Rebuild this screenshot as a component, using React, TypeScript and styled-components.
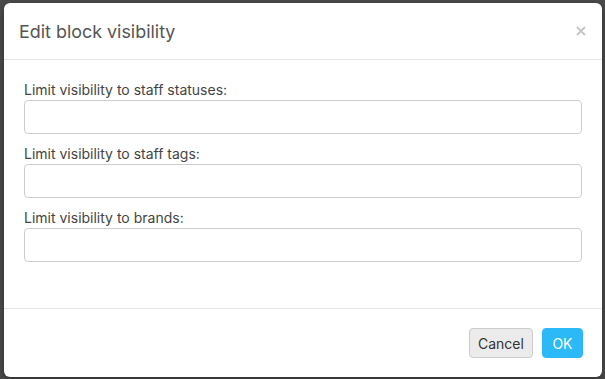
import styled, { createGlobalStyle } from "styled-components";

const GlobalStyle = createGlobalStyle`
  html, body {
    margin: 0;
    padding: 0;
    background: #4b4b4b;
  }
  body {
    font-family: Inter, "Liberation Sans", sans-serif;
  }
`;

const Backdrop = styled.div`
  width: 605px;
  height: 379px;
  padding: 3px 3px 2px 4px;
  box-sizing: border-box;
  background: #4b4b4b;
`;

const Dialog = styled.div`
  width: 598px;
  height: 374px;
  background: #fff;
  border-radius: 6px;
  box-shadow: 0 2px 6px rgba(0, 0, 0, 0.4);
  display: flex;
  flex-direction: column;
  overflow: hidden;
`;

const Header = styled.div`
  display: flex;
  align-items: center;
  justify-content: space-between;
  height: 56px;
  padding: 0 15px;
  border-bottom: 1px solid #e5e5e5;
`;

const Title = styled.h4`
  margin: 0;
  font-size: 17.9px;
  font-weight: 400;
  color: #555;
`;

const Close = styled.button`
  border: none;
  background: none;
  padding: 0;
  margin-right: 1px;
  display: flex;
  cursor: pointer;
`;

const Body = styled.div`
  flex: 1;
  padding: 20px 20px 0;
`;

const Group = styled.div`
  margin-bottom: 10px;
`;

const Label = styled.label`
  display: block;
  font-size: 14px;
  line-height: 20px;
  color: #444;
`;

const Input = styled.input`
  display: block;
  width: 100%;
  box-sizing: border-box;
  height: 34px;
  border: 1px solid #ccc;
  border-radius: 4px;
  padding: 6px 12px;
  font: inherit;
  font-size: 14px;
  outline: none;
`;

const Footer = styled.div`
  display: flex;
  justify-content: flex-end;
  gap: 9px;
  height: 69px;
  box-sizing: border-box;
  padding: 19px 19px 20px;
  border-top: 1px solid #e5e5e5;
`;

const Button = styled.button<{ $primary?: boolean }>`
  height: 30px;
  padding: 0 ${(p) => (p.$primary ? "9.5px" : "8px")};
  font: inherit;
  font-size: 14px;
  border-radius: 4px;
  cursor: pointer;
  border: 1px solid ${(p) => (p.$primary ? "#2bb9f7" : "#cccccc")};
  background: ${(p) => (p.$primary ? "#2bb9f7" : "#ebebeb")};
  color: ${(p) => (p.$primary ? "#fff" : "#333")};
`;

const fields = [
  "Limit visibility to staff statuses:",
  "Limit visibility to staff tags:",
  "Limit visibility to brands:",
];

export default function App() {
  return (
    <>
      <GlobalStyle />
      <Backdrop>
        <Dialog>
          <Header>
            <Title>Edit block visibility</Title>
            <Close aria-label="Close">
              <svg width="10" height="10" viewBox="0 0 10 10">
                <path d="M1 1 L9 9 M9 1 L1 9" stroke="#c4c4c4" strokeWidth="1.8" />
              </svg>
            </Close>
          </Header>
          <Body>
            {fields.map((f) => (
              <Group key={f}>
                <Label>{f}</Label>
                <Input />
              </Group>
            ))}
          </Body>
          <Footer>
            <Button>Cancel</Button>
            <Button $primary>OK</Button>
          </Footer>
        </Dialog>
      </Backdrop>
    </>
  );
}
